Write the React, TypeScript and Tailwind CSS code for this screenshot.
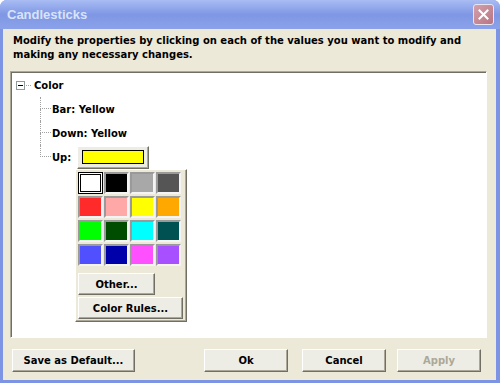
const swatches = [
  '#FFFFFF', '#000000', '#A8A8A8', '#555555',
  '#FF2A2A', '#FFA8A8', '#FFFF00', '#FFA800',
  '#00FF00', '#004D00', '#00FFFF', '#005252',
  '#5050FF', '#0000AA', '#FF50FF', '#A850FF',
];

function XpButton({
  children,
  className = '',
  disabled = false,
}: {
  children: React.ReactNode;
  className?: string;
  disabled?: boolean;
}) {
  return (
    <div
      className={`flex items-center justify-center border border-t-white border-l-white border-r-[#716F64] border-b-[#716F64] bg-[#EEEDE5] shadow-[inset_-1px_-1px_0_#ACA899] ${
        disabled ? 'text-[#ACA899]' : 'text-black'
      } ${className}`}
    >
      {children}
    </div>
  );
}

function TreeChild({ last = false, children }: { last?: boolean; children: React.ReactNode }) {
  return (
    <div className="flex h-[24px] items-center">
      <div className="flex w-[11px] flex-col self-stretch">
        <div className="h-[12px] border-b border-l border-dotted border-[#A0A0A0]" />
        <div className={`flex-1 ${last ? '' : 'border-l border-dotted border-[#A0A0A0]'}`} />
      </div>
      <div className="ml-[1px] flex items-center">{children}</div>
    </div>
  );
}

function ColorPopup() {
  return (
    <div className="absolute left-[64px] top-[97px] flex w-[112px] flex-col border border-t-white border-l-white border-r-[#716F64] border-b-[#716F64] bg-[#ECE9D8] px-[2px] pt-[2px] shadow-[inset_-1px_-1px_0_#ACA899]">
      <div className="grid grid-cols-[repeat(4,25px)] gap-x-[1px] gap-y-[2px]">
        {swatches.map((c, i) =>
          i === 0 ? (
            <div key={c} className="h-[22px] border border-black p-[1px] bg-white">
              <div className="h-full border border-black bg-white" />
            </div>
          ) : (
            <div
              key={c}
              className="h-[22px] border-2 border-t-[#9A9A9A] border-l-[#9A9A9A] border-r-[#F4F4F4] border-b-[#F4F4F4]"
              style={{ backgroundColor: c }}
            />
          ),
        )}
      </div>
      <XpButton className="mt-[7px] h-[22px] w-[77px]">Other...</XpButton>
      <XpButton className="mt-[2px] mb-[2px] h-[22px] w-[105px]">Color Rules...</XpButton>
    </div>
  );
}

export default function App() {
  return (
    <div className="flex h-[383px] w-[500px] flex-col overflow-hidden rounded-t-[7px] bg-[#7D93E4] font-['Tahoma','DejaVu_Sans',sans-serif] text-[10px] font-bold text-black">
      {/* title bar */}
      <div className="flex h-[29px] shrink-0 items-center justify-between bg-gradient-to-b from-[#A9BCF3] via-[#7F97E4] to-[#8BA2EA] pl-[7px] pr-[6px]">
        <span className="font-['Trebuchet_MS','Liberation_Sans',sans-serif] text-[13px] font-bold text-[#D9E3F8]">
          Candlesticks
        </span>
        <div className="flex h-[21px] w-[21px] items-center justify-center rounded-[3px] border border-[#E8E4F0] bg-gradient-to-br from-[#D4A0AC] to-[#B87583]">
          <svg width="11" height="11" viewBox="0 0 11 11">
            <path d="M1.5 1.5 L9.5 9.5 M9.5 1.5 L1.5 9.5" stroke="#FFFFFF" strokeWidth="2" strokeLinecap="square" />
          </svg>
        </div>
      </div>

      {/* body */}
      <div className="mb-[3px] ml-[3px] mr-[4px] flex flex-1 flex-col bg-[#ECE9D8]">
        <p className="ml-[10px] mt-[5px] leading-[14px]">
          Modify the properties by clicking on each of the values you want to modify and
          <br />
          making any necessary changes.
        </p>

        <div className="relative ml-[7px] mr-[9px] mt-[9px] h-[267px] border border-t-[#ACA899] border-l-[#ACA899] border-r-white border-b-white bg-white shadow-[inset_1px_1px_0_#716F64]">
          <div className="pl-[4px] pt-[1px]">
            <div className="flex h-[24px] items-center">
              <div className="ml-[1px] flex h-[9px] w-[9px] items-center justify-center border border-[#919B9C] bg-white">
                <div className="h-[1px] w-[5px] bg-black" />
              </div>
              <div className="ml-[1px] w-[5px] border-t border-dotted border-[#A0A0A0]" />
              <span className="ml-[3px]">Color</span>
            </div>
            <div className="ml-[25px]">
              <TreeChild>Bar: Yellow</TreeChild>
              <TreeChild>Down: Yellow</TreeChild>
              <TreeChild last>
                <span>Up:</span>
                <XpButton className="ml-[6px] h-[23px] w-[72px]">
                  <div className="h-[14px] w-[62px] border border-black bg-[#FFFF00]" />
                </XpButton>
              </TreeChild>
            </div>
          </div>
          <ColorPopup />
        </div>

        <div className="ml-[9px] mr-[15px] mt-[11px] flex h-[23px] items-stretch">
          <XpButton className="w-[123px]">Save as Default...</XpButton>
          <XpButton className="ml-[69px] w-[84px]">Ok</XpButton>
          <XpButton className="ml-[14px] w-[84px]">Cancel</XpButton>
          <XpButton className="ml-[11px] w-[84px]" disabled>
            Apply
          </XpButton>
        </div>
      </div>
    </div>
  );
}
